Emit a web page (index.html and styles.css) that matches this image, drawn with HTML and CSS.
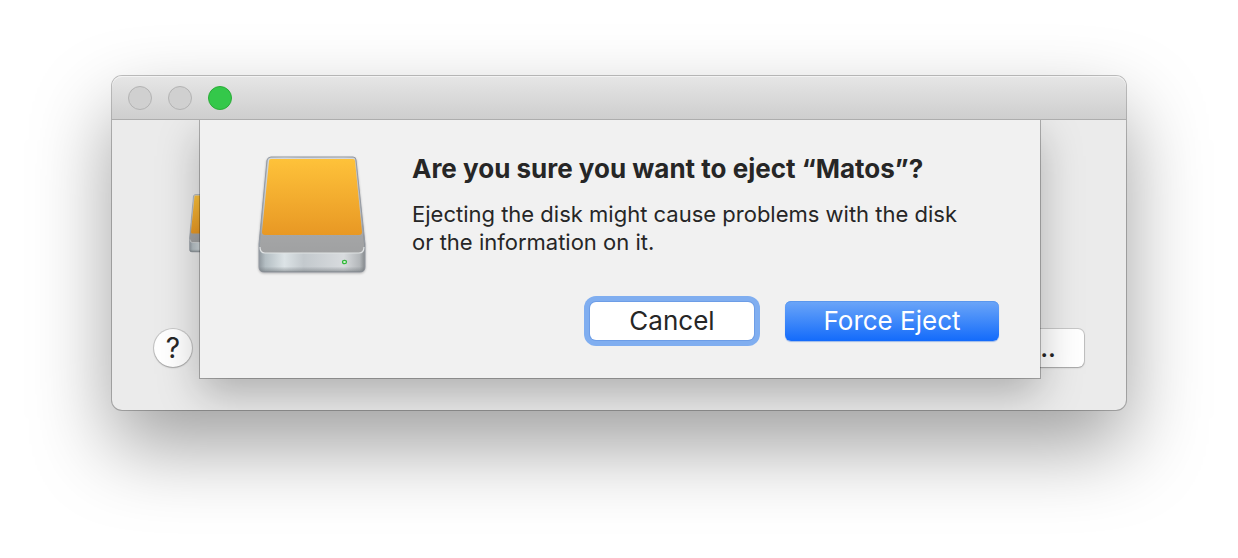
FILE: index.html
```html
<!DOCTYPE html>
<html lang="en">
<head>
<meta charset="utf-8">
<title>Eject disk</title>
<link rel="stylesheet" href="styles.css">
</head>
<body>
<svg class="defs" width="0" height="0" aria-hidden="true">
  <defs>
    <linearGradient id="orange" x1="0" y1="0" x2="0" y2="1">
      <stop offset="0" stop-color="#fec23a"/>
      <stop offset="1" stop-color="#e89824"/>
    </linearGradient>
    <linearGradient id="top" x1="0" y1="0" x2="0" y2="1">
      <stop offset="0" stop-color="#d4d8de"/>
      <stop offset=".6" stop-color="#c2c5c9"/>
      <stop offset=".82" stop-color="#a4a5a6"/>
      <stop offset="1" stop-color="#a0a1a2"/>
    </linearGradient>
    <linearGradient id="front" x1="0" y1="0" x2="1" y2="0">
      <stop offset="0" stop-color="#8f979d"/>
      <stop offset=".06" stop-color="#b4bec3"/>
      <stop offset=".24" stop-color="#dce3e6"/>
      <stop offset=".42" stop-color="#c3c9cd"/>
      <stop offset=".8" stop-color="#d8dbde"/>
      <stop offset=".95" stop-color="#b3b7ba"/>
      <stop offset="1" stop-color="#85898c"/>
    </linearGradient>
    <linearGradient id="shade" x1="0" y1="0" x2="0" y2="1">
      <stop offset=".75" stop-color="#70767b" stop-opacity="0"/>
      <stop offset="1" stop-color="#70767b" stop-opacity=".6"/>
    </linearGradient>
    <symbol id="disk" viewBox="0 0 108 118">
      <path d="M13 1H95Q98 1 98 4L107 88V111Q107 116 102 116H6Q1 116 1 111V88L9 4Q10 1 13 1Z" fill="url(#front)" stroke="#959aa3"/>
      <path d="M1 94V111Q1 116 6 116H102Q107 116 107 111V94Z" fill="url(#shade)"/>
      <path d="M13 2H95Q97 2 97 5L106 89Q107 97 101 97H7Q1 97 2 89L10 5Q10 2 13 2Z" fill="url(#top)"/>
      <path d="M2 91Q2 97 7 97H101Q106 97 106 91" fill="none" stroke="#e0e3e4" stroke-width="1.200"/>
      <path d="M13 3H95Q97 3 97 5L104 76Q104 79 101 79H7Q4 79 4 76L11 5Q11 3 13 3Z" fill="url(#orange)"/>
      <ellipse cx="86.500" cy="106" rx="2" ry="1.700" fill="#d8f5d5" stroke="#32b83b" stroke-width="1.200"/>
    </symbol>
  </defs>
</svg>
<main class="window">
  <header class="titlebar">
    <button class="light" type="button" aria-label="Close"></button>
    <button class="light" type="button" aria-label="Minimize"></button>
    <button class="light light-zoom" type="button" aria-label="Zoom"></button>
  </header>
  <div class="content">
    <svg class="disk-small" aria-hidden="true"><use href="#disk"/></svg>
    <footer class="footer">
      <button class="help" type="button" aria-label="Help">?</button>
      <button class="more" type="button">...</button>
    </footer>
    <section class="sheet" role="alertdialog" aria-labelledby="title" aria-describedby="message">
      <svg class="disk-large" aria-hidden="true"><use href="#disk"/></svg>
      <div class="details">
        <h1 class="title" id="title">Are you sure you want to eject “Matos”?</h1>
        <p class="message" id="message">Ejecting the disk might cause problems with the disk<br>or the information on it.</p>
        <div class="actions">
          <button class="button cancel" type="button">Cancel</button>
          <button class="button primary" type="button">Force Eject</button>
        </div>
      </div>
    </section>
  </div>
</main>
</body>
</html>
```
FILE: styles.css
```css
* { box-sizing: border-box; }
body {
  margin: 0;
  min-height: 100vh;
  padding: 76px 112px;
  background: #fff;
  color: #262626;
  font-family: Inter, "Liberation Sans", sans-serif;
}
button { font: inherit; color: inherit; padding: 0; }
.defs { position: absolute; }
.window {
  border-radius: 10px;
  background: #ebebeb;
  box-shadow: 0 0 0 1px rgba(0, 0, 0, .24), 0 36px 80px rgba(0, 0, 0, .38);
}
.titlebar {
  display: flex;
  align-items: center;
  gap: 16px;
  height: 44px;
  padding: 0 16px;
  border-bottom: 1px solid #adadad;
  border-radius: 10px 10px 0 0;
  background: linear-gradient(#e6e6e6, #cecece);
  box-shadow: inset 0 1px #f3f3f3;
}
.light {
  width: 24px;
  height: 24px;
  border: 1px solid #b3b3b3;
  border-radius: 50%;
  background: #d0d0d0;
}
.light-zoom { border-color: #2bac38; background: #34c84a; }
.content {
  position: relative;
  display: flex;
  flex-direction: column;
  gap: 75px;
  padding: 74px 42px 42px;
  border-radius: 0 0 10px 10px;
  overflow: hidden;
}
.disk-small { width: 54px; height: 59px; margin-left: 35px; }
.footer {
  display: flex;
  justify-content: space-between;
  align-items: center;
  height: 40px;
}
.help {
  width: 38px;
  height: 38px;
  border: 0;
  border-radius: 50%;
  background: #fff;
  box-shadow: 0 0 0 1px rgba(0, 0, 0, .14), 0 1px 2px rgba(0, 0, 0, .2);
  font-size: 28px;
  line-height: 36px;
}
.more {
  width: 160px;
  height: 38px;
  padding: 0 28px 0 0;
  border: 0;
  border-radius: 6px;
  background: #fff;
  box-shadow: 0 0 0 1px rgba(0, 0, 0, .14), 0 1px 2px rgba(0, 0, 0, .2);
  font-size: 26px;
  font-weight: 500;
  line-height: 36px;
  text-align: right;
}
.sheet {
  position: absolute;
  top: 0;
  left: 88px;
  right: 86px;
  display: flex;
  gap: 46px;
  padding: 35px 41px 37px 58px;
  background: #f1f1f1;
  box-shadow: 0 0 0 1px rgba(0, 0, 0, .26), 0 16px 40px rgba(0, 0, 0, .26);
}
.disk-large {
  flex: none;
  width: 108px;
  height: 118px;
  margin-top: 1px;
  filter: drop-shadow(0 1px 1px rgba(0, 0, 0, .25));
}
.details { flex: 1; min-width: 0; }
.title {
  margin: 0 0 17px;
  font-size: 26px;
  font-weight: 700;
  line-height: 28px;
  white-space: nowrap;
}
.message { margin: 0; font-size: 22px; line-height: 28px; white-space: nowrap; }
.actions {
  display: flex;
  justify-content: flex-end;
  align-items: center;
  gap: 31px;
  margin-top: 45px;
}
.button {
  height: 40px;
  border: 0;
  border-radius: 6px;
  font-size: 26px;
  line-height: 40px;
}
.cancel {
  width: 164px;
  height: 38px;
  background: #fff;
  box-shadow: 0 0 0 1px #6d9de6, 0 0 0 6px #80aef0;
  line-height: 38px;
}
.primary {
  width: 214px;
  background: linear-gradient(#6ca6f8, #136bfb);
  box-shadow: inset 0 1px #5a97ed, 0 1px 1px rgba(30, 100, 220, .4);
  color: #fff;
}
```
